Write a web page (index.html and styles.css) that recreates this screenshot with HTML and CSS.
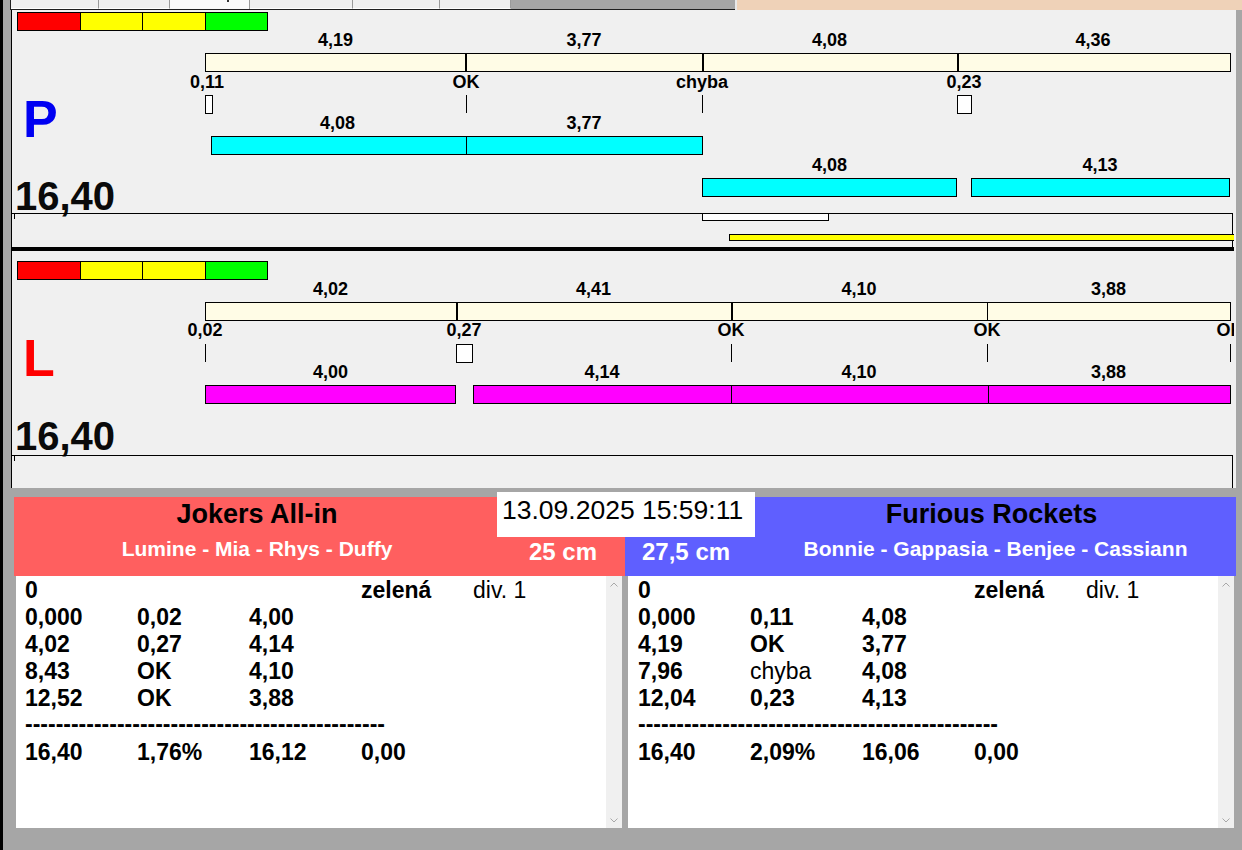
FILE: index.html
```html
<!DOCTYPE html>
<html>
<head>
<meta charset="utf-8">
<title>Timing</title>
<link rel="stylesheet" href="styles.css">
</head>
<body>
<div class="app">
  <div class="tabs">
    <div class="tabs-lead"></div>
    <div class="tabgroup">
      <div class="tab t1"></div>
      <div class="tab t2"></div>
      <div class="tab t3 sel"><span class="tabmark"></span></div>
      <div class="tab t4"></div>
      <div class="tab t5"></div>
      <div class="tab t6"></div>
      <div class="tabfill"></div>
    </div>
    <div class="tabgap"></div>
    <div class="peach"></div>
  </div>

  <div class="main">
    <div class="lane lane-p">
      <div class="scale"><span class="sc-r"></span><span class="sc-y"></span><span class="sc-y"></span><span class="sc-g"></span></div>

      <div class="lb p-top" style="left:323.5px">4,19</div>
      <div class="lb p-top" style="left:572px">3,77</div>
      <div class="lb p-top" style="left:817.5px">4,08</div>
      <div class="lb p-top" style="left:1081px">4,36</div>

      <div class="bar cream p-bar1" style="left:193px;width:1026px"><span class="seg" style="flex:261"></span><span class="seg thick" style="flex:236"></span><span class="seg thick" style="flex:255"></span><span class="seg thick" style="flex:273"></span></div>

      <div class="lb p-sub" style="left:195px">0,11</div>
      <div class="lb p-sub" style="left:454px">OK</div>
      <div class="lb p-sub" style="left:690px">chyba</div>
      <div class="lb p-sub" style="left:952px">0,23</div>

      <div class="mk-box p-mk" style="left:193px;width:8px"></div>
      <div class="mk-line p-mk" style="left:454px"></div>
      <div class="mk-line p-mk" style="left:690px"></div>
      <div class="mk-box p-mk" style="left:945px;width:15px"></div>

      <div class="big blue-l p-big">P</div>

      <div class="lb p-mid" style="left:325.5px">4,08</div>
      <div class="lb p-mid" style="left:572px">3,77</div>
      <div class="bar cyan p-bar2" style="left:199px;width:492px"><span class="seg" style="flex:255"></span><span class="seg" style="flex:236"></span></div>

      <div class="lb p-low" style="left:817.5px">4,08</div>
      <div class="lb p-low" style="left:1088px">4,13</div>
      <div class="bar cyan p-bar3" style="left:690px;width:255px"><span class="seg" style="flex:1"></span></div>
      <div class="bar cyan p-bar3" style="left:959px;width:259px"><span class="seg" style="flex:1"></span></div>

      <div class="total p-total">16,40</div>

      <div class="frame p-frame"></div>
      <div class="tick p-frame"></div>
      <div class="white-rect" style="left:690px;width:127px"></div>
      <div class="yellow-bar" style="left:717px;width:506px"></div>
    </div>

    <div class="sep"></div>

    <div class="lane lane-l">
      <div class="scale l-scale"><span class="sc-r"></span><span class="sc-y"></span><span class="sc-y"></span><span class="sc-g"></span></div>

      <div class="lb l-top" style="left:318.5px">4,02</div>
      <div class="lb l-top" style="left:581.5px">4,41</div>
      <div class="lb l-top" style="left:847px">4,10</div>
      <div class="lb l-top" style="left:1096.5px">3,88</div>

      <div class="bar cream l-bar1" style="left:193px;width:1026px"><span class="seg" style="flex:251"></span><span class="seg thick" style="flex:275"></span><span class="seg thick" style="flex:256"></span><span class="seg" style="flex:243"></span></div>

      <div class="lb l-sub" style="left:193px">0,02</div>
      <div class="lb l-sub" style="left:452px">0,27</div>
      <div class="lb l-sub" style="left:719px">OK</div>
      <div class="lb l-sub" style="left:975px">OK</div>
      <div class="lb l-sub" style="left:1218px">OK</div>

      <div class="mk-line l-mk" style="left:193px"></div>
      <div class="mk-box l-mk" style="left:444px;width:17px"></div>
      <div class="mk-line l-mk" style="left:719px"></div>
      <div class="mk-line l-mk" style="left:975px"></div>
      <div class="mk-line l-mk" style="left:1218px"></div>

      <div class="big red-l l-big">L</div>

      <div class="lb l-mid" style="left:318.5px">4,00</div>
      <div class="lb l-mid" style="left:590px">4,14</div>
      <div class="lb l-mid" style="left:847px">4,10</div>
      <div class="lb l-mid" style="left:1096.5px">3,88</div>

      <div class="bar magenta l-bar2" style="left:193px;width:251px"><span class="seg" style="flex:1"></span></div>
      <div class="bar magenta l-bar2" style="left:461px;width:758px"><span class="seg" style="flex:258"></span><span class="seg" style="flex:256"></span><span class="seg" style="flex:242"></span></div>

      <div class="total l-total">16,40</div>

      <div class="frame l-frame"></div>
      <div class="tick l-frame"></div>
    </div>
  </div>

  <div class="band"></div>

  <div class="teams">
    <div class="heads">
      <div class="head head-red">
        <div class="tname tname-left">Jokers All-in</div>
        <div class="tsub">
          <div class="players">Lumine - Mia - Rhys - Duffy</div>
          <div class="cm cm-left">25 cm</div>
        </div>
      </div>
      <div class="head head-blue">
        <div class="tname tname-right">Furious Rockets</div>
        <div class="tsub">
          <div class="cm cm-right">27,5 cm</div>
          <div class="players">Bonnie - Gappasia - Benjee - Cassiann</div>
        </div>
      </div>
    </div>

    <div class="stamp">13.09.2025 15:59:11</div>

    <div class="lists">
      <div class="list list-left">
        <div class="list-body">
          <div class="lrow"><span>0</span><span></span><span></span><span>zelená</span><span class="reg">div. 1</span></div>
          <div class="lrow"><span>0,000</span><span>0,02</span><span>4,00</span></div>
          <div class="lrow"><span>4,02</span><span>0,27</span><span>4,14</span></div>
          <div class="lrow"><span>8,43</span><span>OK</span><span>4,10</span></div>
          <div class="lrow"><span>12,52</span><span>OK</span><span>3,88</span></div>
          <div class="dash">-----------------------------------------------</div>
          <div class="lrow"><span>16,40</span><span>1,76%</span><span>16,12</span><span>0,00</span></div>
        </div>
        <div class="sbar">
          <svg class="arr" width="8" height="5" viewBox="0 0 8 5"><polyline points="0.5,4.5 4,1 7.5,4.5" fill="none" stroke="#a8a8a8" stroke-width="1"/></svg>
          <svg class="arr" width="8" height="5" viewBox="0 0 8 5"><polyline points="0.5,0.5 4,4 7.5,0.5" fill="none" stroke="#a8a8a8" stroke-width="1"/></svg>
        </div>
      </div>
      <div class="list list-right">
        <div class="list-body">
          <div class="lrow"><span>0</span><span></span><span></span><span>zelená</span><span class="reg">div. 1</span></div>
          <div class="lrow"><span>0,000</span><span>0,11</span><span>4,08</span></div>
          <div class="lrow"><span>4,19</span><span>OK</span><span>3,77</span></div>
          <div class="lrow"><span>7,96</span><span class="reg">chyba</span><span>4,08</span></div>
          <div class="lrow"><span>12,04</span><span>0,23</span><span>4,13</span></div>
          <div class="dash">-----------------------------------------------</div>
          <div class="lrow"><span>16,40</span><span>2,09%</span><span>16,06</span><span>0,00</span></div>
        </div>
        <div class="sbar">
          <svg class="arr" width="8" height="5" viewBox="0 0 8 5"><polyline points="0.5,4.5 4,1 7.5,4.5" fill="none" stroke="#a8a8a8" stroke-width="1"/></svg>
          <svg class="arr" width="8" height="5" viewBox="0 0 8 5"><polyline points="0.5,0.5 4,4 7.5,0.5" fill="none" stroke="#a8a8a8" stroke-width="1"/></svg>
        </div>
      </div>
    </div>
  </div>
</div>
</body>
</html>
```

FILE: styles.css
```css
* { box-sizing: border-box; margin: 0; padding: 0; }
html, body { width: 1242px; height: 850px; overflow: hidden; }
body {
  background: #a6a6a6;
  font-family: "Liberation Sans", Arial, sans-serif;
  color: #000;
}
.app {
  width: 1242px;
  height: 850px;
  border-left: 3px solid #000;
  background: #a6a6a6;
}

/* tab strip */
.tabs { display: flex; height: 10px; }
.tabs-lead { width: 7px; }
.tabgroup {
  display: flex;
  width: 725px;
  height: 10px;
  border-bottom: 1px solid #202020;
  border-left: 1px solid #202020;
}
.tab {
  height: 9px;
  background: #f0f0f0;
  border-right: 1px solid #9a9a9a;
  border-bottom: 1px solid #ffffff;
  position: relative;
}
.tab.sel { background: #fafafa; border-bottom: 0; }
.tabmark {
  position: absolute;
  left: 57px;
  top: 0;
  width: 2px;
  height: 2px;
  background: #333;
}
.t1 { width: 88px; }
.t2 { width: 71px; }
.t3 { width: 80px; }
.t4 { width: 103px; }
.t5 { width: 87px; }
.t6 { width: 71px; }
.tabfill { flex: 1; height: 9px; background: #a6a6a6; }
.tabgap { width: 2px; background: #e8e8e8; }
.peach { flex: 1; background: #efd2b8; }

/* main chart panel */
.main {
  margin-left: 8px;
  width: 1225px;
  border-left: 1px solid #000;
  background: #f0f0f0;
}
.lane {
  position: relative;
  width: 1222px;
  height: 237px;
  overflow: hidden;
}
.sep { width: 1222px; height: 4px; background: #000; }

.scale {
  position: absolute;
  left: 5px;
  top: 2px;
  width: 251px;
  height: 19px;
  display: flex;
  border: 1px solid #000;
}
.l-scale { top: 10px; }
.scale span { flex: 1; border-left: 1px solid #000; }
.scale span:first-child { border-left: 0; }
.sc-r { background: #ff0000; }
.sc-y { background: #ffff00; }
.sc-g { background: #00ff00; }

.lb {
  position: absolute;
  transform: translateX(-50%);
  font-size: 18px;
  font-weight: bold;
  line-height: 20px;
  white-space: nowrap;
}
.p-top { top: 20px; }
.p-sub { top: 62px; }
.p-mid { top: 103px; }
.p-low { top: 145px; }
.l-top { top: 28px; }
.l-sub { top: 69px; }
.l-mid { top: 111px; }

.bar {
  position: absolute;
  height: 19px;
  display: flex;
  border: 1px solid #000;
}
.seg { height: 100%; border-left: 1px solid #000; }
.seg:first-child { border-left: 0; }
.seg.thick { border-left: 2px solid #000; }
.cream { background: #fffce6; }
.cyan { background: #00ffff; }
.magenta { background: #ff00ff; }
.p-bar1 { top: 43px; }
.p-bar2 { top: 126px; }
.p-bar3 { top: 168px; }
.l-bar1 { top: 51px; }
.l-bar2 { top: 134px; }

.mk-line {
  position: absolute;
  width: 1px;
  height: 18px;
  background: #000;
}
.mk-box {
  position: absolute;
  height: 19px;
  border: 1px solid #000;
  background: #fff;
}
.p-mk { top: 85px; }
.l-mk { top: 93px; }

.big {
  position: absolute;
  font-size: 52px;
  font-weight: bold;
  line-height: 52px;
}
.blue-l { color: #0000f2; }
.red-l { color: #ff0000; }
.p-big { top: 83px; left: 11px; }
.l-big { top: 81px; left: 11px; }

.total {
  position: absolute;
  left: 3px;
  font-size: 40px;
  font-weight: bold;
  line-height: 40px;
  color: #0a0a0a;
}
.p-total { top: 166px; }
.l-total { top: 165px; }

.frame {
  position: absolute;
  left: 0;
  width: 1221px;
  bottom: 0;
  border-top: 1px solid #000;
  border-right: 1px solid #000;
}
.p-frame { top: 203px; }
.l-frame { top: 204px; }
.tick {
  position: absolute;
  left: 2px;
  width: 1px;
  height: 6px;
  background: #000;
}
.white-rect {
  position: absolute;
  top: 203px;
  height: 8px;
  background: #fff;
  border: 1px solid #000;
}
.yellow-bar {
  position: absolute;
  top: 224px;
  height: 7px;
  background: #ffff00;
  border: 1px solid #000;
}

.band { height: 9px; }

/* teams */
.teams {
  position: relative;
  margin-left: 11px;
  width: 1222px;
}
.heads {
  display: grid;
  grid-template-columns: 611px 611px;
  height: 79px;
}
.head-red { background: #ff5f5f; }
.head-blue { background: #5f5fff; }
.tname {
  height: 35px;
  font-size: 27px;
  font-weight: bold;
  line-height: 35px;
  text-align: center;
  white-space: nowrap;
}
.tname-left { padding-right: 125px; }
.tname-right { padding-left: 122px; }
.tsub { display: flex; height: 44px; }
.players {
  flex: 1;
  text-align: center;
  color: #fff;
  font-size: 21px;
  font-weight: bold;
  line-height: 34px;
  white-space: nowrap;
}
.cm {
  color: #fff;
  font-size: 24px;
  font-weight: bold;
  line-height: 40px;
  white-space: nowrap;
}
.cm-left { width: 125px; text-align: right; padding-right: 28px; }
.cm-right { width: 130px; padding-left: 17px; }

.stamp {
  position: absolute;
  left: 483px;
  top: -5px;
  width: 258px;
  height: 45px;
  background: #fff;
  font-size: 26.5px;
  line-height: 36px;
  padding-left: 5px;
  white-space: nowrap;
}

.lists {
  display: grid;
  grid-template-columns: 611px 611px;
  height: 252px;
}
.list { display: flex; height: 252px; }
.list-left { padding-left: 2px; }
.list-right { padding-left: 3px; }
.list-body {
  width: 590px;
  height: 252px;
  background: #fff;
  padding: 1px 0 0 9px;
  font-size: 23px;
  font-weight: bold;
}
.list-right .list-body { padding-left: 10px; }
.lrow {
  display: grid;
  grid-template-columns: repeat(5, 112px);
  height: 27px;
  line-height: 27px;
  white-space: nowrap;
}
.reg { font-weight: normal; }
.dash {
  height: 27px;
  line-height: 25px;
  white-space: nowrap;
  overflow: hidden;
}
.sbar {
  width: 16px;
  height: 252px;
  background: #f0f0f0;
  display: flex;
  flex-direction: column;
  justify-content: space-between;
  align-items: center;
  padding: 6px 0 5px;
}
.arr { display: block; }
```
